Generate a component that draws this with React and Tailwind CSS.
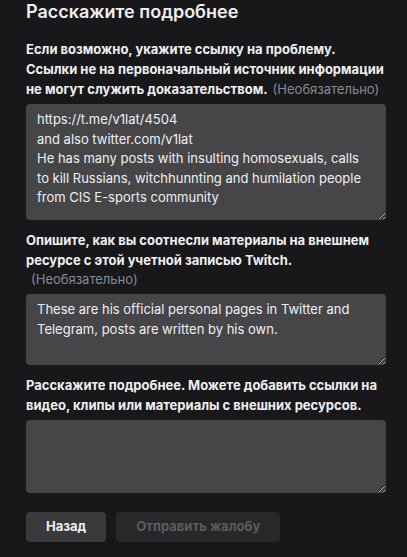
import React from "react";

function Field({ label, optional, optionalBlock, value, height }) {
  return (
    <div className="flex flex-col w-[360px]">
      <div className="text-[13px] leading-[20px] font-bold text-[#efeff1] mb-[5px]">
        {label}
        {optional && (
          <span className="font-normal text-[#8a8a92] ml-[5px]">(Необязательно)</span>
        )}
        {optionalBlock && (
          <div className="font-normal text-[#8a8a92] pl-[5px] leading-[19px]">(Необязательно)</div>
        )}
      </div>
      <textarea
        readOnly
        defaultValue={value}
        style={{ height }}
        className="w-[360px] bg-[#464649] rounded-[4px] pl-[11px] pr-[20px] py-[6px] text-[13px] leading-[19.5px] text-[#efeff1] outline-none resize-y [color-scheme:dark] font-['Inter',sans-serif] overflow-hidden"
      />
    </div>
  );
}

export default function App() {
  return (
    <div className="w-[407px] h-[557px] bg-[#18181b] font-['Inter',sans-serif] pl-[26px] overflow-hidden">
      <h1 className="text-[18px] leading-[22px] font-semibold text-[#efeff1] pt-[1px]">Расскажите подробнее</h1>
      <div className="flex flex-col gap-[10px] mt-[16px]">
        <Field
          label={
            <>
              Если возможно, укажите ссылку на проблему.
              <br />
              Ссылки не на первоначальный источник информации не могут служить доказательством.
            </>
          }
          optional
          value={"https://t.me/v1lat/4504\nand also twitter.com/v1lat\nHe has many posts with insulting homosexuals, calls to kill Russians, witchhunnting and humilation people from CIS E-sports community"}
          height={116}
        />
        <Field
          label="Опишите, как вы соотнесли материалы на внешнем ресурсе с этой учетной записью Twitch."
          optionalBlock
          value="These are his official personal pages in Twitter and Telegram, posts are written by his own."
          height={71}
        />
        <Field
          label="Расскажите подробнее. Можете добавить ссылки на видео, клипы или материалы с внешних ресурсов."
          value=""
          height={73}
        />
      </div>
      <div className="flex gap-[10px] mt-[19px]">
        <button className="h-[30px] px-[20px] rounded-[4px] bg-[#3a3a3d] text-[13px] font-bold text-[#efeff1]">Назад</button>
        <button className="h-[30px] px-[20px] rounded-[4px] bg-[#28282b] text-[13px] font-bold text-[#5c5c61]">Отправить жалобу</button>
      </div>
    </div>
  );
}
